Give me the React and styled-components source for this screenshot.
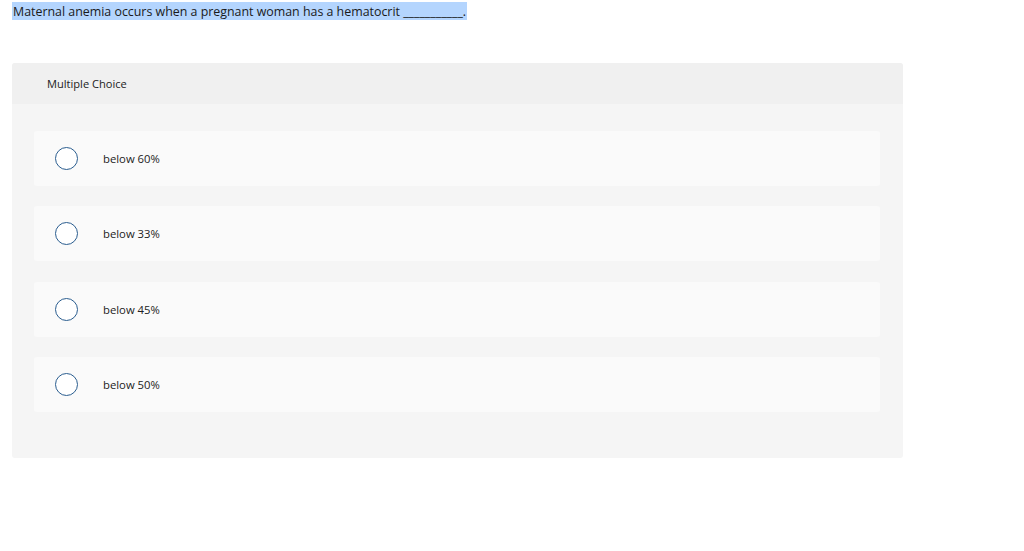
import styled, { createGlobalStyle } from "styled-components";

const GlobalStyle = createGlobalStyle`
	body {
		margin: 0;
		background: #ffffff;
		font-family: "Open Sans", "Liberation Sans", Arial, sans-serif;
		color: #222;
	}
`;

const options = ["below 60%", "below 33%", "below 45%", "below 50%"];

const App = () => {
	return (
		<>
			<GlobalStyle />
			<Page>
				<Question>
					<Highlight>
						Maternal anemia occurs when a pregnant woman has a hematocrit
						___________.
					</Highlight>
				</Question>
				<Card>
					<CardHeader>Multiple Choice</CardHeader>
					<OptionList>
						{options.map((opt) => (
							<Option key={opt}>
								<Radio />
								<OptionText>{opt}</OptionText>
							</Option>
						))}
					</OptionList>
				</Card>
			</Page>
		</>
	);
};

const Page = styled.div`
	padding: 3px 121px 0 12px;
`;

const Question = styled.div`
	font-size: 12.4px;
	line-height: 18px;
	height: 18px;
`;

const Highlight = styled.span`
	background: #b4d5fe;
	color: #1a1a1a;
	padding: 1px 1px 0 1px;
`;

const Card = styled.div`
	margin-top: 42px;
	background: #f5f5f5;
	border-radius: 3px;
	padding-bottom: 46px;
`;

const CardHeader = styled.div`
	background: #f0f0f0;
	height: 41px;
	display: flex;
	align-items: center;
	padding-left: 35px;
	font-size: 11.1px;
	color: #222;
	border-radius: 3px 3px 0 0;
`;

const OptionList = styled.div`
	display: flex;
	flex-direction: column;
	gap: 20.4px;
	padding: 27px 23px 0 22px;
`;

const Option = styled.div`
	height: 55px;
	background: #fafafa;
	border-radius: 3px;
	display: flex;
	align-items: center;
	padding-left: 21px;
`;

const Radio = styled.span`
	width: 21px;
	height: 21px;
	border: 1.2px solid #2a5d8f;
	border-radius: 50%;
	background: #ffffff;
	flex-shrink: 0;
`;

const OptionText = styled.span`
	margin-left: 25px;
	font-size: 11.3px;
	color: #222;
`;

export default App;
